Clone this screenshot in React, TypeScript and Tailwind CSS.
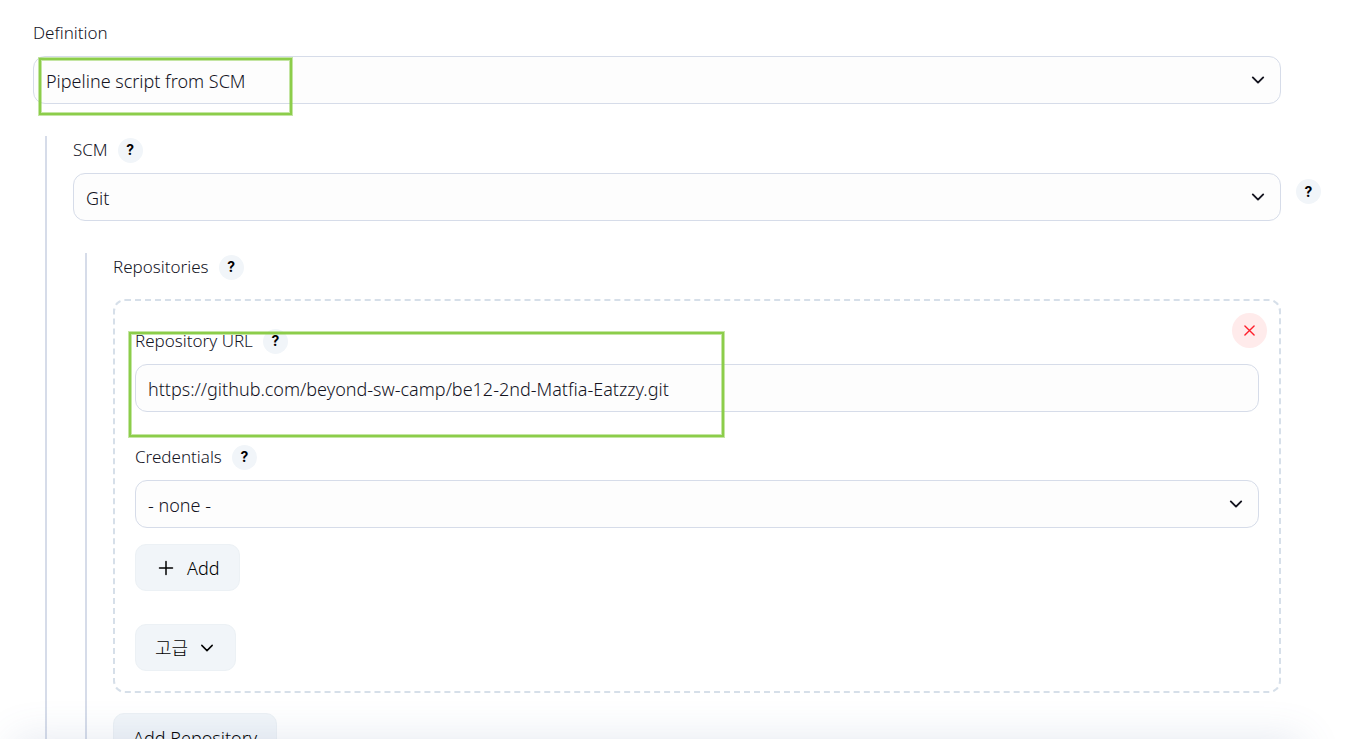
import type { ReactNode } from "react";

type LabelRowProps = {
  htmlFor?: string;
  label: string;
  help?: boolean;
};

type SelectBoxProps = {
  id: string;
  options: string[];
};

const buttonClass =
  "flex h-[47px] items-center rounded-[11px] border border-[#ecf1f5] bg-[#f1f5f9] text-lg text-black";

const fieldClass =
  "block h-12 w-full rounded-xl border border-[#d6dce9] bg-[#fdfdfd] px-3 pt-px text-lg";

const highlightClass =
  "pointer-events-none absolute border-2 border-[#8ccd4a] shadow-[0_0_0_1px_#8ccd4a80,inset_0_0_0_1px_#8ccd4a80]";

function Chevron({ className = "" }: { className?: string }) {
  return (
    <svg
      viewBox="0 0 14 14"
      className={`h-3.5 w-3.5 ${className}`}
      fill="none"
      stroke="currentColor"
      strokeLinecap="round"
      strokeLinejoin="round"
      aria-hidden="true"
    >
      <path d="M1.8 4.4 7 9.6l5.2-5.2" />
    </svg>
  );
}

function HelpButton({ className = "" }: { className?: string }) {
  return (
    <button
      type="button"
      className={`flex h-[25px] w-[25px] shrink-0 items-center justify-center rounded-full bg-[#f1f5f9] font-['Inter',sans-serif] text-sm font-bold text-black ${className}`}
    >
      ?
    </button>
  );
}

function LabelRow({ htmlFor, label, help = true }: LabelRowProps) {
  return (
    <div className="mb-2.5 flex h-[26px] items-center gap-2.5">
      <label htmlFor={htmlFor}>{label}</label>
      {help && <HelpButton />}
    </div>
  );
}

function SelectBox({ id, options }: SelectBoxProps) {
  return (
    <div className="relative flex-1">
      <select id={id} className={`${fieldClass} appearance-none`}>
        {options.map((option) => (
          <option key={option}>{option}</option>
        ))}
      </select>
      <Chevron className="pointer-events-none absolute top-[17px] right-4 stroke-[1.9]" />
    </div>
  );
}

// nested block with the guide line on its left
function Nested({ children }: { children: ReactNode }) {
  return (
    <div className="mt-8 ml-3 grow border-l-2 border-[#d6dce9] pt-px pl-[26px]">
      {children}
    </div>
  );
}

export default function App() {
  return (
    <div className="h-screen overflow-hidden bg-white pb-[5px] font-['Noto_Sans','Noto_Sans_CJK_KR',sans-serif] text-[17px] leading-6 font-[350] text-[#14141f]">
      <main className="relative flex h-full flex-col overflow-hidden pt-5 pr-[83px] pl-[33px]">
        <div className="relative">
          <LabelRow htmlFor="definition" label="Definition" help={false} />
          <SelectBox
            id="definition"
            options={["Pipeline script from SCM", "Pipeline script"]}
          />
          <div className={`${highlightClass} top-[38px] left-1.5 h-[57px] w-[253px]`} />
        </div>

        <Nested>
          <LabelRow htmlFor="scm" label="SCM" />
          <div className="-mr-10 flex">
            <SelectBox id="scm" options={["Git", "None"]} />
            <HelpButton className="mt-1.5 ml-[15px]" />
          </div>

          <Nested>
            <LabelRow label="Repositories" />

            <section className="relative mt-[19px] rounded-xl border-2 border-dashed border-[#d6dfe9] px-5 pt-[27px] pb-5">
              <button
                type="button"
                aria-label="Delete"
                className="absolute top-3 right-3 flex h-[35px] w-[35px] items-center justify-center rounded-full bg-[#ffebeb] text-[#ff1f2b]"
              >
                <svg
                  viewBox="0 0 12 12"
                  className="h-[11px] w-[11px]"
                  stroke="currentColor"
                  strokeWidth="1.5"
                  strokeLinecap="round"
                  aria-hidden="true"
                >
                  <path d="M1 1l10 10M11 1L1 11" />
                </svg>
              </button>

              <div className="relative">
                <LabelRow htmlFor="repository-url" label="Repository URL" />
                <input
                  id="repository-url"
                  type="text"
                  defaultValue="https://github.com/beyond-sw-camp/be12-2nd-Matfia-Eatzzy.git"
                  className={fieldClass}
                />
                <div className={`${highlightClass} top-1 -left-1.5 h-[105px] w-[595px]`} />
              </div>

              <div className="mt-8">
                <LabelRow htmlFor="credentials" label="Credentials" />
                <SelectBox id="credentials" options={["- none -"]} />
              </div>

              <button type="button" className={`${buttonClass} mt-4 px-[19px]`}>
                <svg
                  viewBox="0 0 22 22"
                  className="mr-2.5 h-[22px] w-[22px]"
                  stroke="currentColor"
                  strokeWidth="1.5"
                  strokeLinecap="round"
                  aria-hidden="true"
                >
                  <path d="M11 4.5v13M4.5 11h13" />
                </svg>
                Add
              </button>

              <button
                type="button"
                className={`${buttonClass} mt-[33px] gap-3 pr-[21px] pl-[19px]`}
              >
                <span className="font-light">고급</span>
                <Chevron className="stroke-[1.5]" />
              </button>
            </section>

            <button type="button" className={`${buttonClass} mt-5 px-[19px] pt-0.5`}>
              Add Repository
            </button>
          </Nested>
        </Nested>

        {/* shadow of the bottom bar */}
        <div className="pointer-events-none absolute top-full right-[62px] left-3.5 h-20 shadow-[0_0_40px_rgba(90,115,160,0.16)]" />
      </main>
    </div>
  );
}
